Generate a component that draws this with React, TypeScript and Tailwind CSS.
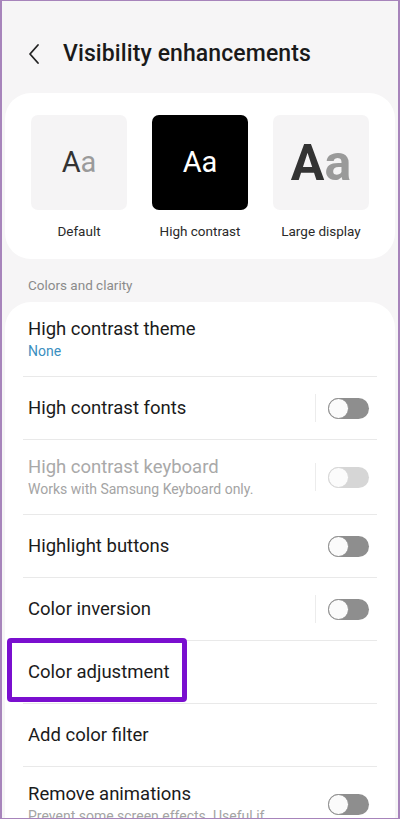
import React from "react";

type Row = {
    title: string
    sub?: string
    subBlue?: boolean
    toggle?: boolean
    bar?: boolean
    disabled?: boolean
    highlight?: boolean
};

const rows: Row[] = [
    {title: "High contrast theme", sub: "None", subBlue: true},
    {title: "High contrast fonts", toggle: true, bar: true},
    {title: "High contrast keyboard", sub: "Works with Samsung Keyboard only.", toggle: true, bar: true, disabled: true},
    {title: "Highlight buttons", toggle: true},
    {title: "Color inversion", toggle: true, bar: true},
    {title: "Color adjustment", highlight: true},
    {title: "Add color filter"},
    {title: "Remove animations", sub: "Prevent some screen effects. Useful if", toggle: true},
];

function Toggle({disabled}: { disabled?: boolean }) {
    return (
        <div className={`relative w-[41px] h-[21px] rounded-full ${disabled ? "bg-[#d6d6d6]" : "bg-[#8e8e8e]"}`}>
            <div className={`absolute left-0 top-0 w-[21px] h-[21px] rounded-full bg-[#fbfbfb] border-[1.5px] ${disabled ? "border-[#d6d6d6]" : "border-[#8e8e8e]"}`}/>
        </div>
    );
}

function SettingRow({row, last}: { row: Row, last: boolean }) {
    const tall = !!row.sub;
    return (
        <div className="relative">
            <div className={`flex items-center pl-[23px] pr-[26px] ${tall ? "h-[74px]" : "h-[62px]"}`}>
                <div className="flex-1 min-w-0">
                    <div className={`text-[18.5px] leading-[24px] ${row.disabled ? "text-[#a9a9a9]" : "text-[#1b1b1b]"}`}>
                        {row.title}
                    </div>
                    {row.sub && (
                        <div className={`text-[14px] leading-[20px] ${row.subBlue ? "text-[#3b8fc0]" : "text-[#a4a4a4]"}`}>
                            {row.sub}
                        </div>
                    )}
                </div>
                {row.bar && <div className="w-px h-[28px] bg-[#ececec] mr-[12px]"/>}
                {row.toggle && <Toggle disabled={row.disabled}/>}
            </div>
            {!last && <div className="mx-[18px] h-px bg-[#e9e9e9]"/>}
            {row.highlight && (
                <div className="absolute left-[2px] top-[-3px] w-[180px] h-[64px] border-[5px] border-[#7a0fcf] rounded-[4px]"/>
            )}
        </div>
    );
}

function Tile({label, children, dark}: { label: string, children: React.ReactNode, dark?: boolean }) {
    return (
        <div className="flex flex-col items-center w-[96px]">
            <div className={`w-[96px] h-[95px] rounded-[7px] flex items-center justify-center ${dark ? "bg-black" : "bg-[#f5f4f5]"}`}>
                {children}
            </div>
            <div className="mt-[11px] text-[13.5px] leading-[20px] text-[#2a2a2a] whitespace-nowrap">{label}</div>
        </div>
    );
}

export default function App() {
    return (
        <div className="w-[400px] h-[819px] overflow-hidden bg-[#f6f5f6] border-x-2 border-y border-[#a784bb] flex flex-col"
             style={{fontFamily: "Roboto, 'Noto Sans', sans-serif"}}>
            <div className="shrink-0 h-[92px] flex items-center pl-[24px] pt-[14px]">
                <svg width="16" height="22" viewBox="0 0 16 22" fill="none" className="mr-[21px]">
                    <path d="M12 2 L4 11 L12 20" stroke="#222" strokeWidth="1.8" strokeLinecap="round" strokeLinejoin="round"/>
                </svg>
                <div className="text-[23px] font-medium text-[#1a1a1a] tracking-[0.1px]">Visibility enhancements</div>
            </div>

            <div className="shrink-0 mx-[3px] bg-white rounded-[26px] pt-[22px] pb-[18px] px-[26px] flex justify-between">
                <Tile label="Default">
                    <span className="text-[29px] text-[#333] leading-none">A<span className="text-[#9a9a9a]">a</span></span>
                </Tile>
                <Tile label="High contrast" dark>
                    <span className="text-[29px] text-white leading-none">Aa</span>
                </Tile>
                <Tile label="Large display">
                    <span className="text-[50px] font-bold text-[#333] leading-none">A<span className="text-[#9a9a9a]">a</span></span>
                </Tile>
            </div>

            <div className="shrink-0 pl-[26px] pt-[17px] pb-[8px] text-[13.5px] leading-[18px] text-[#8b8b8b]">Colors and clarity</div>

            <div className="shrink-0 mx-[3px] bg-white rounded-[26px]">
                {rows.map((row, i) => (
                    <SettingRow key={row.title} row={row} last={i === rows.length - 1}/>
                ))}
            </div>
        </div>
    );
}
